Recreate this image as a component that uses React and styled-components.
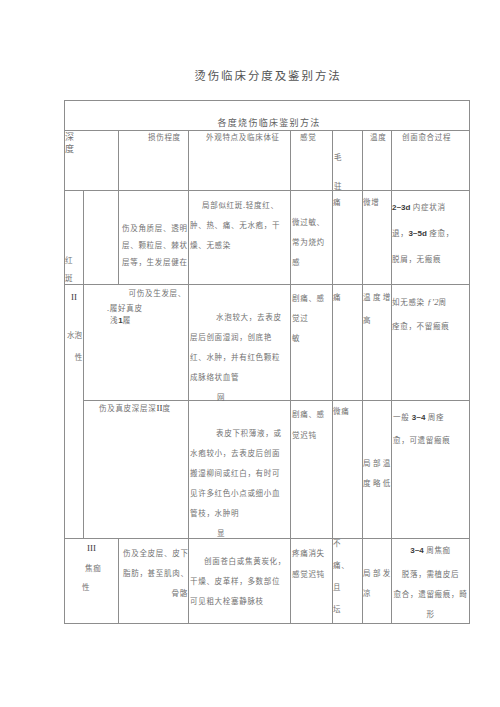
import React from "react";
import styled, { createGlobalStyle } from "styled-components";

const GlobalStyle = createGlobalStyle`
  html, body {
    margin: 0;
    padding: 0;
    background: #ffffff;
  }
  body {
    font-family: "Noto Sans CJK SC", "Noto Sans", sans-serif;
  }
`;

const Page = styled.div`
  padding: 67px 0 40px 64px;
`;

const Title = styled.h1`
  width: 406px;
  box-sizing: border-box;
  margin: 0;
  padding-left: 2px;
  text-align: center;
  font-size: 11.5px;
  line-height: 16px;
  font-weight: normal;
  letter-spacing: 1.9px;
  color: #555555;
`;

/* the ruled table: the 1px gaps are the rules */
const Sheet = styled.div`
  display: grid;
  grid-template-columns: 18px 34px 69px 101px 41px 29px 28px 77px;
  grid-template-rows: 29px 59px 93px 115px 137px 84px;
  gap: 1px;
  padding: 1px;
  width: max-content;
  margin-top: 17px;
  background: #8d8d8d;
  font-size: 7.5px;
  letter-spacing: 0.7px;
  color: #727272;
`;

const Cell = styled.div`
  grid-column: ${(p) => p.$col};
  grid-row: ${(p) => p.$row};
  background: #ffffff;
  padding: ${(p) => p.$pad || "0"};
  line-height: ${(p) => p.$lh || 12}px;
  text-align: ${(p) => p.$align || "left"};
  white-space: nowrap;
`;

const Caption = styled(Cell)`
  display: flex;
  align-items: flex-end;
  justify-content: center;
  font-size: 9px;
  letter-spacing: 1.3px;
  color: #606060;
`;

const Line = styled.div`
  padding-left: ${(p) => p.$indent || 0}px;
  margin-top: ${(p) => p.$mt || 0}px;
  text-align: ${(p) => p.$align || "inherit"};
`;

const Big = styled.div`
  font-size: 9px;
  letter-spacing: 0;
  line-height: 12px;
`;

const Spread = styled.span`
  letter-spacing: 2.4px;
`;

const Tight = styled.span`
  letter-spacing: 0;
`;

const Num = styled.span`
  font-family: "Liberation Sans", Arial, sans-serif;
  font-weight: bold;
  font-size: 8px;
  letter-spacing: 0;
  color: #3a3a3a;
`;

const Roman = styled.span`
  font-family: "Liberation Serif", "Times New Roman", serif;
  font-size: 9px;
  letter-spacing: 0;
  color: #3a3a3a;
`;

const Odd = styled.span`
  font-family: "Liberation Serif", "Times New Roman", serif;
  font-style: italic;
  font-size: 8.5px;
  letter-spacing: 0;
`;

export default function App() {
  return (
    <>
      <GlobalStyle />
      <Page>
        <Title>烫伤临床分度及鉴别方法</Title>
        <Sheet>
          <Caption $col="1 / -1" $row="1" $pad="0 0 1px 4px">
            各度烧伤临床鉴别方法
          </Caption>

          {/* header */}
          <Cell $col="1 / 3" $row="2">
            <Big>深</Big>
            <Big>度</Big>
          </Cell>
          <Cell $col="3" $row="2" $pad="0 0 0 29px">损伤程度</Cell>
          <Cell $col="4" $row="2" $pad="0 0 0 17px">外观特点及临床体征</Cell>
          <Cell $col="5" $row="2" $pad="0 0 0 9px">感觉</Cell>
          <Cell $col="6" $row="2" $pad="0 0 0 1px">
            <Line $mt={20}>毛</Line>
            <Line $mt={17}>驻</Line>
          </Cell>
          <Cell $col="7" $row="2" $pad="0 0 0 7px">温度</Cell>
          <Cell $col="8" $row="2" $pad="0 0 0 10px">创面愈合过程</Cell>

          {/* I */}
          <Cell $col="1" $row="3" $lh={18} $pad="60px 0 0 0">
            <Line>红</Line>
            <Line>斑</Line>
          </Cell>
          <Cell $col="2" $row="3" />
          <Cell $col="3" $row="3" $lh={17} $pad="28px 0 0 3px">
            <Line>伤及角质层、透明</Line>
            <Line>层、颗粒层、棘状</Line>
            <Line>层等，生发层健在</Line>
          </Cell>
          <Cell $col="4" $row="3" $lh={20} $pad="4px 0 0 1px">
            <Line $indent={12}>局部似红斑.轻度红、</Line>
            <Line>肿、热、痛、无水疱，干</Line>
            <Line>燥、无感染</Line>
          </Cell>
          <Cell $col="5" $row="3" $lh={20} $pad="21px 0 0 1px">
            <Line>微过敏、</Line>
            <Line>常为烧灼</Line>
            <Line>感</Line>
          </Cell>
          <Cell $col="6" $row="3" $pad="5px 0 0 0">痛</Cell>
          <Cell $col="7" $row="3" $pad="5px 0 0 0">微增</Cell>
          <Cell $col="8" $row="3" $lh={25} $pad="2.5px 0 0 0">
            <Line>
              <Num>2~3d</Num> 内症状消
            </Line>
            <Line>
              退，<Num>3~5d</Num> 痊愈，
            </Line>
            <Line>脱屑，无瘢痕</Line>
          </Cell>

          {/* II */}
          <Cell $col="1" $row="4 / 6">
            <Line $mt={6} $align="center">
              <Roman>II</Roman>
            </Line>
            <Line $mt={26} $indent={2}>
              <Tight>水泡</Tight>
            </Line>
            <Line $mt={10} $align="right">性</Line>
          </Cell>
          <Cell $col="2 / 4" $row="4" $pad="2px 2px 0 0">
            <Line $align="right">可伤及生发层、</Line>
            <Line $mt={3} $indent={23}>.履好真皮</Line>
            <Line $indent={26}>
              浅<Num>1</Num>履
            </Line>
          </Cell>
          <Cell $col="4" $row="4" $lh={20} $pad="22px 0 0 1px">
            <Line $indent={26}>水泡较大，去表皮</Line>
            <Line>层后创面湿润，创底艳</Line>
            <Line>红、水肿，并有红色颗粒</Line>
            <Line>成脉络状血管</Line>
            <Line $indent={27}>网</Line>
          </Cell>
          <Cell $col="5" $row="4" $lh={20} $pad="3px 0 0 1px">
            <Line>剧痛、感</Line>
            <Line>觉过</Line>
            <Line>敏</Line>
          </Cell>
          <Cell $col="6" $row="4" $pad="6px 0 0 0">痛</Cell>
          <Cell $col="7" $row="4" $lh={23}>
            <Line>
              <Spread>温度增</Spread>
            </Line>
            <Line>高</Line>
          </Cell>
          <Cell $col="8" $row="4" $lh={24} $pad="5px 0 0 0">
            <Line>
              如无感染 <Odd>ƒ’2</Odd>周
            </Line>
            <Line>痊愈，不留瘢痕</Line>
          </Cell>

          <Cell $col="2 / 4" $row="5" $pad="1px 0 0 15px">
            伤及真皮深层深<Roman>II</Roman>度
          </Cell>
          <Cell $col="4" $row="5" $lh={20} $pad="22px 0 0 1px">
            <Line $indent={26}>表皮下积薄液，或</Line>
            <Line>水疱较小，去表皮后创面</Line>
            <Line>搬湿柳间或红白，有时可</Line>
            <Line>见许多红色小点或细小血</Line>
            <Line>管枝，水肿明</Line>
            <Line $indent={27}>显</Line>
          </Cell>
          <Cell $col="5" $row="5" $lh={21} $pad="1.5px 0 0 1px">
            <Line>剧痛、感</Line>
            <Line>觉迟钝</Line>
          </Cell>
          <Cell $col="6" $row="5" $pad="4px 0 0 0">微痛</Cell>
          <Cell $col="7" $row="5" $lh={20} $pad="52px 0 0 0">
            <Line>
              <Spread>局部温</Spread>
            </Line>
            <Line>
              <Spread>度略低</Spread>
            </Line>
          </Cell>
          <Cell $col="8" $row="5" $lh={22} $pad="5px 0 0 1px">
            <Line>
              一般 <Num>3~4</Num> 周痊
            </Line>
            <Line>愈，可遗留瘢痕</Line>
          </Cell>

          {/* III */}
          <Cell $col="1 / 3" $row="6">
            <Line $mt={3} $indent={22}>
              <Roman>III</Roman>
            </Line>
            <Line $mt={8} $indent={20}>焦痂</Line>
            <Line $mt={7} $indent={17}>性</Line>
          </Cell>
          <Cell $col="3" $row="6" $lh={20} $pad="4px 0 0 4px">
            <Line>伤及全皮层、皮下</Line>
            <Line>脂肪，甚至肌肉、</Line>
            <Line $align="right">骨骼</Line>
          </Cell>
          <Cell $col="4" $row="6" $lh={20} $pad="12px 0 0 1px">
            <Line $indent={14}>创面苍白或焦黄炭化，</Line>
            <Line>干燥、皮革样，多数部位</Line>
            <Line>可见粗大栓塞静脉枝</Line>
          </Cell>
          <Cell $col="5" $row="6" $lh={21} $pad="2.5px 0 0 1px">
            <Line>疼痛消失</Line>
            <Line>感觉迟钝</Line>
          </Cell>
          <Cell $col="6" $row="6" $lh={22}>
            <Line $mt={-7}>不</Line>
            <Line>痛、</Line>
            <Line>且</Line>
            <Line>坛</Line>
          </Cell>
          <Cell $col="7" $row="6" $lh={20} $pad="24px 0 0 0">
            <Line>
              <Spread>局部发</Spread>
            </Line>
            <Line>凉</Line>
          </Cell>
          <Cell $col="8" $row="6" $lh={20} $pad="1px 0 0 0" $align="center">
            <Line>
              <Num>3~4</Num> 周焦痂
            </Line>
            <Line $mt={3}>脱落，需植皮后</Line>
            <Line>愈合，遗留瘢痕，畸</Line>
            <Line>形</Line>
          </Cell>
        </Sheet>
      </Page>
    </>
  );
}
